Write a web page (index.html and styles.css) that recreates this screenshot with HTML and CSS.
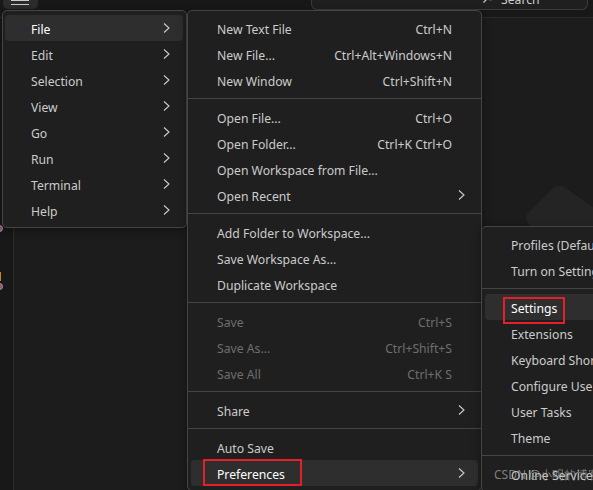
FILE: index.html
```html
<!DOCTYPE html>
<html>
<head>
<meta charset="utf-8">
<link rel="stylesheet" href="styles.css">
</head>
<body>
<div class="window">
  <header class="titlebar">
    <div class="hamburger"><span></span><span></span></div>
    <div class="nav">
      <svg width="16" height="16" viewBox="0 0 16 16"><path d="M7 3 L2 8 L7 13 M2 8 H14" fill="none" stroke="#8a8a8a" stroke-width="1.2"/></svg>
      <svg width="16" height="16" viewBox="0 0 16 16"><path d="M9 3 L14 8 L9 13 M14 8 H2" fill="none" stroke="#8a8a8a" stroke-width="1.2"/></svg>
    </div>
    <div class="search">
      <svg width="14" height="14" viewBox="0 0 14 14"><circle cx="8.5" cy="5.5" r="4.2" fill="none" stroke="#cccccc" stroke-width="1.1"/><path d="M5.5 8.5 L1.5 12.5" stroke="#cccccc" stroke-width="1.2"/></svg>
      <span>Search</span>
    </div>
  </header>
  <div class="workbench">
    <div class="activitybar">
      <i class="dot dot-a"></i>
      <i class="bar-b"></i>
      <i class="dot dot-c"></i>
    </div>
    <div class="editor">
      <svg class="logo" width="110" height="90" viewBox="0 0 110 90"><path d="M40 6 L100 48 L60 82 L14 32 Z" fill="#242424" stroke="#242424" stroke-width="14" stroke-linejoin="round"/></svg>
    </div>
  </div>

  <div class="menu menu-main">
    <div class="item active"><span class="label">File</span><svg class="chev" width="7" height="10" viewBox="0 0 7 10"><path d="M1 0.5 L6 5 L1 9.5" fill="none" stroke="currentColor" stroke-width="1.1"/></svg></div>
    <div class="item"><span class="label">Edit</span><svg class="chev" width="7" height="10" viewBox="0 0 7 10"><path d="M1 0.5 L6 5 L1 9.5" fill="none" stroke="currentColor" stroke-width="1.1"/></svg></div>
    <div class="item"><span class="label">Selection</span><svg class="chev" width="7" height="10" viewBox="0 0 7 10"><path d="M1 0.5 L6 5 L1 9.5" fill="none" stroke="currentColor" stroke-width="1.1"/></svg></div>
    <div class="item"><span class="label">View</span><svg class="chev" width="7" height="10" viewBox="0 0 7 10"><path d="M1 0.5 L6 5 L1 9.5" fill="none" stroke="currentColor" stroke-width="1.1"/></svg></div>
    <div class="item"><span class="label">Go</span><svg class="chev" width="7" height="10" viewBox="0 0 7 10"><path d="M1 0.5 L6 5 L1 9.5" fill="none" stroke="currentColor" stroke-width="1.1"/></svg></div>
    <div class="item"><span class="label">Run</span><svg class="chev" width="7" height="10" viewBox="0 0 7 10"><path d="M1 0.5 L6 5 L1 9.5" fill="none" stroke="currentColor" stroke-width="1.1"/></svg></div>
    <div class="item"><span class="label">Terminal</span><svg class="chev" width="7" height="10" viewBox="0 0 7 10"><path d="M1 0.5 L6 5 L1 9.5" fill="none" stroke="currentColor" stroke-width="1.1"/></svg></div>
    <div class="item"><span class="label">Help</span><svg class="chev" width="7" height="10" viewBox="0 0 7 10"><path d="M1 0.5 L6 5 L1 9.5" fill="none" stroke="currentColor" stroke-width="1.1"/></svg></div>
  </div>

  <div class="menu menu-file">
    <div class="item"><span class="label">New Text File</span><span class="key">Ctrl+N</span></div>
    <div class="item"><span class="label">New File...</span><span class="key">Ctrl+Alt+Windows+N</span></div>
    <div class="item"><span class="label">New Window</span><span class="key">Ctrl+Shift+N</span></div>
    <div class="sep"></div>
    <div class="item"><span class="label">Open File...</span><span class="key">Ctrl+O</span></div>
    <div class="item"><span class="label">Open Folder...</span><span class="key">Ctrl+K Ctrl+O</span></div>
    <div class="item"><span class="label">Open Workspace from File...</span></div>
    <div class="item"><span class="label">Open Recent</span><svg class="chev" width="7" height="10" viewBox="0 0 7 10"><path d="M1 0.5 L6 5 L1 9.5" fill="none" stroke="currentColor" stroke-width="1.1"/></svg></div>
    <div class="sep"></div>
    <div class="item"><span class="label">Add Folder to Workspace...</span></div>
    <div class="item"><span class="label">Save Workspace As...</span></div>
    <div class="item"><span class="label">Duplicate Workspace</span></div>
    <div class="sep"></div>
    <div class="item disabled"><span class="label">Save</span><span class="key">Ctrl+S</span></div>
    <div class="item disabled"><span class="label">Save As...</span><span class="key">Ctrl+Shift+S</span></div>
    <div class="item disabled"><span class="label">Save All</span><span class="key">Ctrl+K S</span></div>
    <div class="sep"></div>
    <div class="item"><span class="label">Share</span><svg class="chev" width="7" height="10" viewBox="0 0 7 10"><path d="M1 0.5 L6 5 L1 9.5" fill="none" stroke="currentColor" stroke-width="1.1"/></svg></div>
    <div class="sep"></div>
    <div class="item"><span class="label">Auto Save</span></div>
    <div class="item active"><span class="label">Preferences</span><svg class="chev" width="7" height="10" viewBox="0 0 7 10"><path d="M1 0.5 L6 5 L1 9.5" fill="none" stroke="currentColor" stroke-width="1.1"/></svg><span class="redbox redbox-pref"></span></div>
  </div>

  <div class="menu menu-pref">
    <div class="item"><span class="label">Profiles (Default)</span></div>
    <div class="item"><span class="label">Turn on Settings Sync...</span></div>
    <div class="sep"></div>
    <div class="item active"><span class="label">Settings</span><span class="redbox redbox-set"></span></div>
    <div class="item"><span class="label">Extensions</span></div>
    <div class="item"><span class="label">Keyboard Shortcuts</span></div>
    <div class="item"><span class="label">Configure User Snippets</span></div>
    <div class="item"><span class="label">User Tasks</span></div>
    <div class="item"><span class="label">Theme</span></div>
    <div class="sep"></div>
    <div class="item"><span class="label">Online Services Settings</span></div>
  </div>

  <div class="watermark">CSDN @小明的博客</div>
</div>
</body>
</html>
```

FILE: styles.css
```css
* { box-sizing: border-box; }
html, body {
  margin: 0;
  padding: 0;
  background: #181818;
  width: 593px;
  height: 490px;
  overflow: hidden;
  font-family: "Noto Sans", "Open Sans", sans-serif;
  font-size: 12.2px;
  color: #cccccc;
}
.window {
  position: relative;
  width: 593px;
  height: 490px;
  display: flex;
  flex-direction: column;
  overflow: hidden;
}
.titlebar {
  height: 18px;
  flex: none;
  display: flex;
  align-items: flex-end;
  background: #181818;
  border-bottom: 1px solid #2b2b2b;
}
.hamburger {
  margin-left: 3px;
  margin-bottom: 8px;
  width: 35px;
  height: 12px;
  background: #2c2c2c;
  border-radius: 0 0 5px 5px;
  display: flex;
  flex-direction: column;
  gap: 3px;
  padding: 3px 0 0 8px;
}
.hamburger span {
  display: block;
  width: 18px;
  height: 1px;
  background: #cccccc;
}
.nav {
  margin-left: 219px;
  margin-bottom: 15px;
  display: flex;
  gap: 7px;
}
.search {
  margin-left: 15px;
  margin-bottom: 7px;
  width: 277px;
  height: 28px;
  background: #1f1f1f;
  border: 1px solid #3a3a3a;
  border-top: none;
  border-radius: 0 0 6px 6px;
  display: flex;
  align-items: flex-end;
  padding: 0 0 2px 170px;
  gap: 5px;
  line-height: 14px;
}
.search svg { margin-bottom: 3px; }
.workbench {
  flex: 1;
  display: flex;
}
.activitybar {
  width: 14px;
  flex: none;
  background: #181818;
  border-right: 1px solid #2b2b2b;
  position: relative;
}
.dot {
  position: absolute;
  left: -4px;
  width: 7px;
  height: 7px;
  border-radius: 50%;
  border: 1px solid #6fa3d8;
  background: #b8484a;
}
.dot-a { top: 207px; }
.dot-c { top: 265px; }
.bar-b {
  position: absolute;
  left: 0;
  top: 254px;
  width: 1px;
  height: 9px;
  background: #c08a1a;
}
.editor {
  flex: 1;
  background: #1c1c1c;
  position: relative;
}
.logo {
  position: absolute;
  left: 505px;
  top: 168px;
}

.menu {
  position: absolute;
  background: #1f1f1f;
  border: 1px solid #454545;
  border-radius: 5px;
  padding: 4px 3px;
  box-shadow: 0 2px 8px rgba(0,0,0,0.36);
}
.menu-main { left: 2px; top: 10px; width: 185px; z-index: 1; padding-left: 2px; }
.menu-file { left: 187px; top: 10px; width: 295px; z-index: 2; }
.menu-pref { left: 481px; top: 226px; width: 200px; z-index: 3; }

.item {
  position: relative;
  height: 26px;
  display: flex;
  align-items: center;
  padding: 2px 26px 0;
  border-radius: 4px;
  white-space: nowrap;
}
.item .label { flex: 1; }
.item .key { margin-left: 20px; }
.item .chev {
  margin-right: -13px;
  margin-top: -2px;
  color: #cccccc;
}
.item.active {
  background: #2e2e2e;
  color: #ffffff;
}
.item.disabled { color: #6e6e6e; }
.sep {
  height: 1px;
  margin: 5px -3px;
  background: #454545;
}
.redbox {
  position: absolute;
  border: 2px solid #e3202a;
  pointer-events: none;
}
.redbox-pref { left: 12px; top: -1px; width: 99px; height: 27px; }
.redbox-set { left: 18px; top: 3px; width: 62px; height: 27px; }
.watermark {
  position: absolute;
  left: 494px;
  top: 466px;
  z-index: 4;
  font-size: 12px;
  color: rgba(170,170,170,0.7);
  white-space: nowrap;
}
```
